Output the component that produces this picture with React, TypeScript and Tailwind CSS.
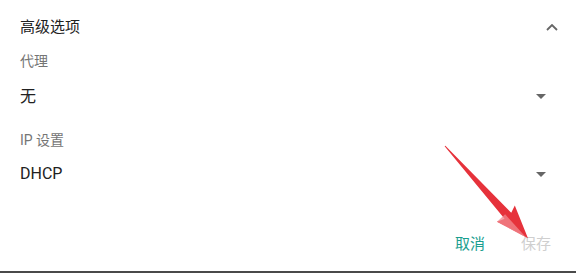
import React from "react";

const font = { fontFamily: 'Roboto, "Noto Sans CJK SC", sans-serif' };

function Caret() {
  return (
    <svg width="10" height="5" viewBox="0 0 10 5" className="block">
      <path d="M0 0 L10 0 L5 5 Z" fill="#666" />
    </svg>
  );
}

export default function App() {
  const L = 124;
  return (
    <div className="relative w-[576px] h-[273px] bg-white overflow-hidden flex flex-col" style={font}>
      <div className="flex flex-col pl-[20px] pt-[15px] flex-1">
        <div className="h-[25px] flex items-center justify-between pr-[18px]">
          <span className="text-[15px] text-[#212121]">高级选项</span>
          <svg width="12" height="7" viewBox="0 0 12 7" className="block">
            <path d="M1 6 L6 1 L11 6" fill="none" stroke="#666" strokeWidth="1.8" />
          </svg>
        </div>
        <div className="mt-[10px] h-[23px] flex items-center">
          <span className="text-[14px] text-[#757575]">代理</span>
        </div>
        <div className="mt-[11px] h-[25px] flex items-center justify-between pr-[30px]">
          <span className="text-[16px] text-[#212121]">无</span>
          <Caret />
        </div>
        <div className="mt-[19px] h-[24px] flex items-center">
          <span className="text-[14px] text-[#757575]">IP 设置</span>
        </div>
        <div className="mt-[10px] h-[24px] flex items-center justify-between pr-[30px]">
          <span className="text-[16px] text-[#212121]">DHCP</span>
          <Caret />
        </div>
        <div className="mt-[46px] h-[25px] flex items-center justify-end gap-[36px] pr-[25px]">
          <span className="text-[15px] text-[#1a9e8f]">取消</span>
          <span className="text-[15px] text-[#cfcfcf]">保存</span>
        </div>
      </div>
      <div className="h-[2px] bg-[#4a4a4a]" />
      <svg className="absolute left-0 top-0 pointer-events-none" width="576" height="273">
        <g transform="translate(445 146) rotate(48)">
          <polygon points={`0,-0.5 ${L - 30},-4.5 ${L - 33},-12 ${L},0 ${L - 33},12 ${L - 30},4.5 0,0.5`} fill="#e6323b" />
          <polygon points={`${L - 33},1 ${L - 33},12 ${L - 2},1`} fill="#f28a90" opacity="0.75" />
        </g>
      </svg>
    </div>
  );
}
